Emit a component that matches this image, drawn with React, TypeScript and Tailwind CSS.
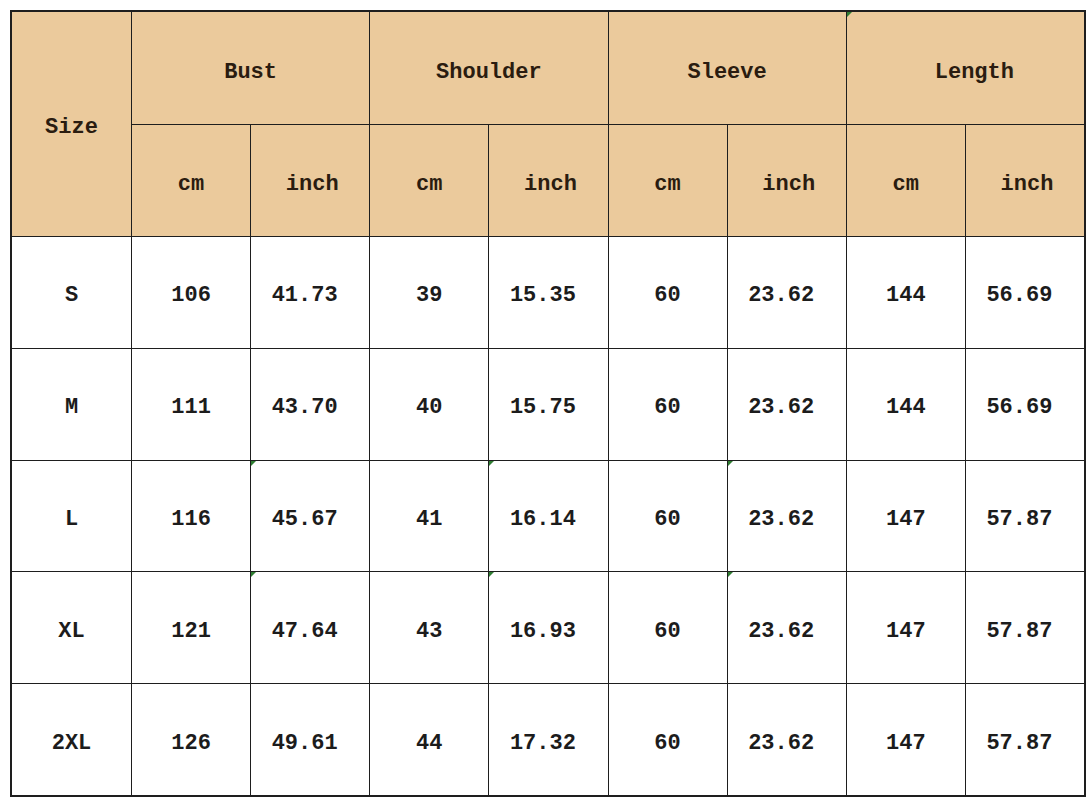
import type { ReactNode } from "react";

type Row = { size: string; values: string[]; marks?: number[] };

const groups = ["Bust", "Shoulder", "Sleeve", "Length"];

// marks = indexes (0-7) of value cells that carry the little green corner flag
const rows: Row[] = [
  { size: "S", values: ["106", "41.73", "39", "15.35", "60", "23.62", "144", "56.69"] },
  { size: "M", values: ["111", "43.70", "40", "15.75", "60", "23.62", "144", "56.69"] },
  { size: "L", values: ["116", "45.67", "41", "16.14", "60", "23.62", "147", "57.87"], marks: [1, 3, 5] },
  { size: "XL", values: ["121", "47.64", "43", "16.93", "60", "23.62", "147", "57.87"], marks: [1, 3, 5] },
  { size: "2XL", values: ["126", "49.61", "44", "17.32", "60", "23.62", "147", "57.87"] },
];

const Flag = () => (
  <span className="absolute left-0 top-0 h-0 w-0 border-t-[5px] border-r-[5px] border-t-[#2f7d32] border-r-transparent" />
);

const Cell = ({
  children,
  head,
  flag,
  className = "",
}: {
  children: ReactNode;
  head?: boolean;
  flag?: boolean;
  className?: string;
}) => (
  <div
    className={`relative flex items-center justify-center pt-[7px] ${
      head ? "bg-[#ebca9c] text-[#2a1c10]" : "bg-white text-[#1c1c1c]"
    } ${className}`}
  >
    {flag && <Flag />}
    {children}
  </div>
);

const App = () => {
  return (
    <div className="min-h-[800px] w-[1089px] bg-white pl-[10px] pt-[10px]">
      <div className="grid h-[787px] w-[1076px] grid-cols-[119px_repeat(8,1fr)] grid-rows-[112px_111px_repeat(5,1fr)] gap-px bg-[#1e1e1e] p-[2px] font-['Liberation_Mono',monospace] text-[22px] font-bold">
        <Cell head className="row-span-2">
          Size
        </Cell>
        {groups.map((g, i) => (
          <Cell
            key={g}
            head
            flag={i === 3}
            className={`col-span-2 pt-[9px] ${i === 3 ? "pl-[18px]" : ""}`}
          >
            {g}
          </Cell>
        ))}
        {groups.map((g) => [
          <Cell key={`${g}-cm`} head>
            cm
          </Cell>,
          <Cell key={`${g}-in`} head className="pl-[4px]">
            inch
          </Cell>,
        ])}
        {rows.map((r) => [
          <Cell key={r.size}>{r.size}</Cell>,
          ...r.values.map((v, i) => (
            <Cell
              key={`${r.size}-${i}`}
              flag={r.marks?.includes(i)}
              className={v.includes(".") ? "pr-[11px]" : ""}
            >
              {v}
            </Cell>
          )),
        ])}
      </div>
    </div>
  );
};

export default App;
